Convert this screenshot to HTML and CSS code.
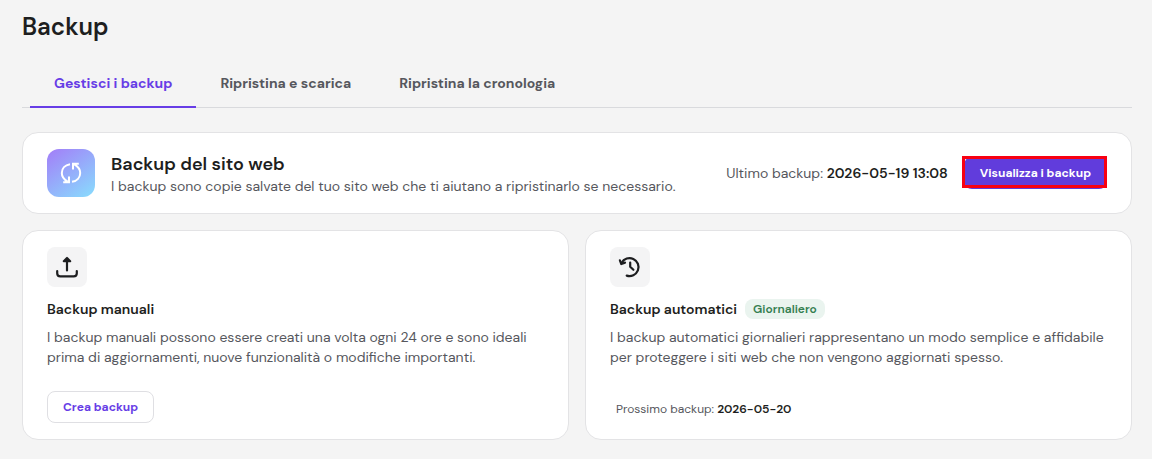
FILE: index.html
```html
<!DOCTYPE html>
<html lang="it">
<head>
<meta charset="utf-8">
<meta name="viewport" content="width=device-width, initial-scale=1">
<title>Backup</title>
<link rel="stylesheet" href="styles.css">
</head>
<body>
<main class="page">
  <h1 class="page-title">Backup</h1>
  <nav class="tabs" aria-label="Backup">
    <a class="tab tab-active" href="#gestisci" aria-current="page">Gestisci i backup</a>
    <a class="tab" href="#ripristina">Ripristina e scarica</a>
    <a class="tab" href="#cronologia">Ripristina la cronologia</a>
  </nav>

  <section class="card summary">
    <div class="summary-icon">
      <svg width="24" height="24" viewBox="0 0 24 24" fill="none" stroke="currentColor" stroke-width="2" aria-hidden="true">
        <path d="M11 3.2C6 4 2.8 7.6 2.8 12C2.8 15.6 4.8 18.4 8.6 20.6M4.2 21.2H10V15.6"/>
        <path d="M13 20.8C18 20 21.2 16.4 21.2 12C21.2 8.4 19.2 5.6 15.4 3.4M19.8 2.8H14V8.4"/>
      </svg>
    </div>
    <div class="summary-body">
      <h2 class="summary-title">Backup del sito web</h2>
      <p class="text">I backup sono copie salvate del tuo sito web che ti aiutano a ripristinarlo se necessario.</p>
    </div>
    <p class="text last-backup">Ultimo backup: <strong>2026-05-19 13:08</strong></p>
    <div class="highlighted">
      <button class="button button-primary" type="button">Visualizza i backup</button>
    </div>
  </section>

  <div class="grid">
    <section class="card option">
      <div class="option-icon">
        <svg width="24" height="24" viewBox="0 0 24 24" fill="none" stroke="currentColor" stroke-width="2.2" stroke-linecap="round" stroke-linejoin="round" aria-hidden="true">
          <path d="M12 15.5V3.2M8.8 6.2L12 3L15.2 6.2Z"/>
          <path d="M2.2 16V18.2Q2.2 21.3 5.3 21.3H18.7Q21.8 21.3 21.8 18.2V16"/>
        </svg>
      </div>
      <h3 class="option-title">Backup manuali</h3>
      <p class="text">I backup manuali possono essere creati una volta ogni 24 ore e sono ideali prima di aggiornamenti, nuove funzionalità o modifiche importanti.</p>
      <div class="option-footer">
        <button class="button button-outline" type="button">Crea backup</button>
      </div>
    </section>
    <section class="card option">
      <div class="option-icon">
        <svg width="24" height="24" viewBox="0 0 24 24" fill="none" stroke="currentColor" stroke-width="2.2" stroke-linecap="round" stroke-linejoin="round" aria-hidden="true">
          <path d="M3.6 7.8A9 9 0 1 1 8.7 20.6"/>
          <path d="M1.9 5.3L3.3 9L7 7.6M12.2 7.5V11.8L15.4 14.8"/>
        </svg>
      </div>
      <h3 class="option-title">Backup automatici <span class="badge">Giornaliero</span></h3>
      <p class="text">I backup automatici giornalieri rappresentano un modo semplice e affidabile per proteggere i siti web che non vengono aggiornati spesso.</p>
      <div class="option-footer">
        <p class="next-backup">Prossimo backup: <strong>2026-05-20</strong></p>
      </div>
    </section>
  </div>
</main>
</body>
</html>
```
FILE: styles.css
```css
* { box-sizing: border-box; }

body {
  margin: 0;
  background: #f4f4f4;
  color: #1d1e20;
  font-family: "DM Sans", Inter, sans-serif;
  font-size: 14px;
  line-height: 20px;
}

h1, h2, h3, p { margin: 0; }

strong { color: #1d1e20; font-weight: 600; }

.page { padding: 11px 20px 19px 22px; }

.page-title {
  font-size: 24px;
  line-height: 32px;
  font-weight: 600;
}

.tabs {
  display: flex;
  margin: 17px 0 24px;
  padding: 0 8px;
  border-bottom: 1px solid #d9dadd;
}

.tab {
  margin-bottom: -1px;
  padding: 13px 24px;
  border-bottom: 2px solid transparent;
  color: #56575d;
  font-weight: 700;
  text-decoration: none;
}

.tab-active {
  border-color: #673de6;
  color: #673de6;
}

.card {
  background: #fff;
  border: 1px solid #e3e3e5;
  border-radius: 16px;
  padding: 16px 24px;
}

.summary {
  display: flex;
  align-items: center;
  gap: 16px;
  margin-bottom: 16px;
}

.summary-icon {
  display: grid;
  place-items: center;
  flex: none;
  width: 48px;
  height: 48px;
  border-radius: 12px;
  background: linear-gradient(145deg, #a37df8, #88ddfd);
  color: #fff;
}

.summary-body { flex: 1; }

.summary-title {
  padding-top: 2px;
  font-size: 18px;
  line-height: 24px;
  font-weight: 600;
}

.text { color: #56575d; }

.last-backup { white-space: nowrap; }

.button {
  height: 32px;
  padding: 0 16px;
  border: 0;
  border-radius: 8px;
  font-family: inherit;
  font-size: 12px;
  line-height: 20px;
  font-weight: 700;
  white-space: nowrap;
}

.button-primary { background: #613cdc; color: #fff; }

.button-outline {
  padding: 0 15px;
  border: 1px solid #dfdfe3;
  background: #fff;
  color: #673de6;
}

.highlighted { position: relative; }

.highlighted::after {
  content: "";
  position: absolute;
  inset: -1px 0 1px -2px;
  border: 3px solid #f80012;
}

.grid {
  display: grid;
  grid-template-columns: 1fr 1fr;
  gap: 16px;
}

.option { display: flex; flex-direction: column; }

.option-icon {
  display: grid;
  place-items: center;
  width: 40px;
  height: 40px;
  margin-bottom: 12px;
  border-radius: 8px;
  background: #f4f4f5;
}

.option-title {
  display: flex;
  align-items: center;
  gap: 8px;
  margin-bottom: 8px;
  font-size: 14px;
  line-height: 20px;
  font-weight: 600;
}

.badge {
  padding: 0 8px;
  border-radius: 8px;
  background: #eaf4ef;
  color: #357f51;
  font-size: 12px;
  font-weight: 600;
}

.option-footer {
  display: flex;
  align-items: center;
  min-height: 32px;
  margin-top: 24px;
}

.next-backup {
  padding: 4px 6px 0;
  color: #56575d;
  font-size: 12px;
}
```
